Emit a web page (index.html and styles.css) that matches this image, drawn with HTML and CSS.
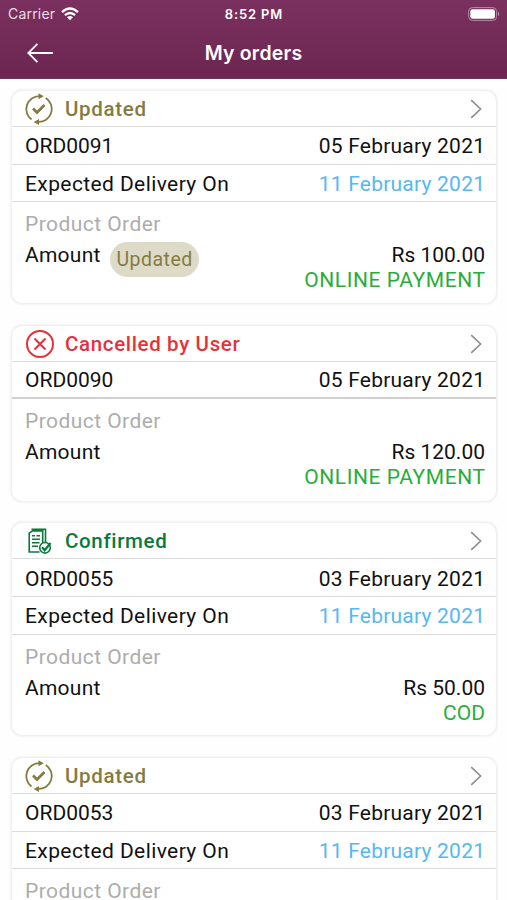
FILE: index.html
```
<!DOCTYPE html>
<html lang="en">
<head>
<meta charset="utf-8">
<title>My orders</title>
<link rel="stylesheet" href="styles.css">
</head>
<body>
<svg width="0" height="0" class="defs" aria-hidden="true">
  <symbol id="updated" viewBox="0 0 30 32">
    <g fill="none" stroke="currentColor" stroke-width="1.8">
      <path d="M7.5 26.5A13 13 0 0 1 15.5 3.1M21.8 5A13 13 0 0 1 14 28.9"/>
      <path d="M9 15.5l4 4 7.5-7.5" stroke-width="2.8"/>
    </g>
    <path d="M14.5.3l5.3 3-5.3 3zM15 25.9l-5.3 3 5.3 3z" fill="currentColor"/>
  </symbol>
  <symbol id="cancelled" viewBox="0 0 30 32">
    <g fill="none" stroke="currentColor" stroke-width="2">
      <circle cx="16" cy="16" r="13"/>
      <path d="M10.5 10.5l11 11M21.5 10.5l-11 11"/>
    </g>
  </symbol>
  <symbol id="confirmed" viewBox="0 0 30 32">
    <g fill="none" stroke="currentColor" stroke-width="1.6">
      <path d="M15.5 27H5.2V8.2L8.5 5.9h10.2V18M8.3 6V4.2h13.2V17M8 10.8h3M12.5 10.8h3.5M8 14.3h8M8 17.8h7.5M8 21.3h6"/>
      <circle cx="21" cy="22.8" r="5.3"/>
      <path d="M18 22.3l2.6 3 6-7.3" stroke-width="2.2"/>
    </g>
  </symbol>
  <symbol id="chevron" viewBox="0 0 12 20">
    <path d="M1.2 1.2L10.6 10 1.2 18.8" fill="none" stroke="currentColor" stroke-width="1.6"/>
  </symbol>
</svg>
<header class="header">
  <div class="status">
    <div class="carrier"><span>Carrier</span>
      <svg width="18" height="14" viewBox="0 0 18 14"><g fill="none" stroke="#fff" stroke-width="2.3"><path d="M1 5.1Q9-2 17 5.1M3.9 8.2Q9 3.8 14.1 8.2"/></g><path d="M6 10.2Q9 7.8 12 10.2L9 13.2z" fill="#fff"/></svg>
    </div>
    <span class="time">8:52 PM</span>
    <svg class="battery" width="32" height="14" viewBox="0 0 32 14"><rect x=".6" y=".6" width="28" height="12.8" rx="3.8" fill="none" stroke="#b68da7" stroke-width="1"/><rect x="2.3" y="2.3" width="24.6" height="9.4" rx="2.2" fill="#fff"/><path d="M30 4.8q2.6 2.2 0 4.4z" fill="#b68da7"/></svg>
  </div>
  <div class="nav">
    <svg class="back" width="26" height="20" viewBox="0 0 26 20"><path d="M10.4.8L1.3 10l9.1 9.2M1.3 10h24.5" fill="none" stroke="#fff" stroke-width="1.8"/></svg>
    <h1>My orders</h1>
  </div>
</header>
<main class="orders">
  <article class="card">
    <div class="row head updated"><svg class="icon"><use href="#updated"/></svg><h2 class="t-updated">Updated</h2><svg class="chevron"><use href="#chevron"/></svg></div>
    <div class="row"><span class="id">ORD0091</span><span class="date">05 February 2021</span></div>
    <div class="row"><span class="expected">Expected Delivery On</span><span class="date blue">11 February 2021</span></div>
    <div class="body">
      <div class="kind">Product Order</div>
      <div class="total"><span class="amount">Amount</span><span class="pill">Updated</span><span class="price">Rs 100.00</span></div>
      <div class="pay online">ONLINE PAYMENT</div>
    </div>
  </article>
  <article class="card short">
    <div class="row head cancelled"><svg class="icon"><use href="#cancelled"/></svg><h2 class="t-cancelled">Cancelled by User</h2><svg class="chevron"><use href="#chevron"/></svg></div>
    <div class="row strong"><span class="id">ORD0090</span><span class="date">05 February 2021</span></div>
    <div class="body">
      <div class="kind">Product Order</div>
      <div class="total"><span class="amount">Amount</span><span class="price">Rs 120.00</span></div>
      <div class="pay online">ONLINE PAYMENT</div>
    </div>
  </article>
  <article class="card">
    <div class="row head confirmed"><svg class="icon"><use href="#confirmed"/></svg><h2 class="t-confirmed">Confirmed</h2><svg class="chevron"><use href="#chevron"/></svg></div>
    <div class="row"><span class="id">ORD0055</span><span class="date">03 February 2021</span></div>
    <div class="row"><span class="expected">Expected Delivery On</span><span class="date blue">11 February 2021</span></div>
    <div class="body">
      <div class="kind">Product Order</div>
      <div class="total"><span class="amount">Amount</span><span class="price">Rs 50.00</span></div>
      <div class="pay">COD</div>
    </div>
  </article>
  <article class="card">
    <div class="row head updated"><svg class="icon"><use href="#updated"/></svg><h2 class="t-updated">Updated</h2><svg class="chevron"><use href="#chevron"/></svg></div>
    <div class="row"><span class="id">ORD0053</span><span class="date">03 February 2021</span></div>
    <div class="row"><span class="expected">Expected Delivery On</span><span class="date blue">11 February 2021</span></div>
    <div class="body"><div class="kind">Product Order</div></div>
  </article>
</main>
</body>
</html>
```
FILE: styles.css
```
* { box-sizing: border-box; }
html, body { margin: 0; height: 900px; overflow: hidden; }
body { background: #fefefe; color: #111; font: 21px/24px Roboto, "Liberation Sans", sans-serif; white-space: nowrap; }
.defs { position: absolute; }
h1, h2 { margin: 0; font-weight: 500; }
.header { height: 79px; background: linear-gradient(#7b315f, #6c2550); border-bottom: 1px solid #71325b; color: #fff; }
.status { height: 27px; display: grid; grid-template-columns: 1fr auto 1fr; align-items: center; padding: 0 7px 0 8px; font: 14px/18px Inter, Roboto, sans-serif; }
.carrier { display: flex; align-items: center; gap: 6px; color: #eddde8; letter-spacing: .2px; }
.time { font-weight: 600; font-size: 13px; letter-spacing: .95px; }
.time { letter-spacing: .85px; }
.battery { justify-self: end; }
.nav { height: 51px; display: grid; grid-template-columns: 1fr auto 1fr; align-items: center; padding: 0 27px; }
.nav h1 { font: 600 19.5px/26px Inter, Roboto, sans-serif; letter-spacing: .2px; }
.orders { padding: 12px 11px 0 12px; display: flex; flex-direction: column; gap: 22.5px; }
.card { height: 212px; flex: none; border-radius: 10px; background: #fff; box-shadow: 0 0 3px 1px #e8e8e8; }
.card.short { height: 175.3px; }
.row { height: 37.6px; display: flex; align-items: center; justify-content: space-between; padding: 2px 11px 0 13px; border-bottom: 1.5px solid #dcdcdc; }
.row.head { height: 36.2px; padding-top: 1px; justify-content: flex-start; }
.row.strong { border-bottom: 2px solid #d0d0d0; }
.icon { width: 30px; height: 32px; margin: 0 11px 0 -1px; flex: none; }
.chevron { width: 12px; height: 20px; margin-left: auto; margin-right: 3px; color: #8c8c8c; }
h2 { font-size: 20.5px; line-height: 24px; }
.updated { color: #857b42; }
.cancelled { color: #e6313b; }
.confirmed { color: #087b3b; }
.t-updated { letter-spacing: .7px; }
.t-cancelled { letter-spacing: .65px; }
.t-confirmed { letter-spacing: .65px; }
.id { letter-spacing: 0; }
.date { letter-spacing: .22px; margin-right: -.2px; }
.blue { color: #57b8ef; }
.expected { letter-spacing: .4px; }
.body { padding: 10px 11px 0 13px; }
.kind { color: #adadad; letter-spacing: .44px; line-height: 25px; }
.total { height: 31px; display: flex; align-items: flex-start; padding-top: 6px; }
.amount { letter-spacing: .25px; }
.price { margin-left: auto; letter-spacing: 0; }
.pill { width: 89px; height: 35px; margin: -1px 0 0 9.5px; border-radius: 18px; background: #dddbc8; color: #857b42; font-size: 19.5px; line-height: 35px; text-align: center; letter-spacing: .5px; }
.pay { text-align: right; color: #28ad3b; line-height: 25px; }
.online { letter-spacing: .58px; margin-right: -.6px; }
```
